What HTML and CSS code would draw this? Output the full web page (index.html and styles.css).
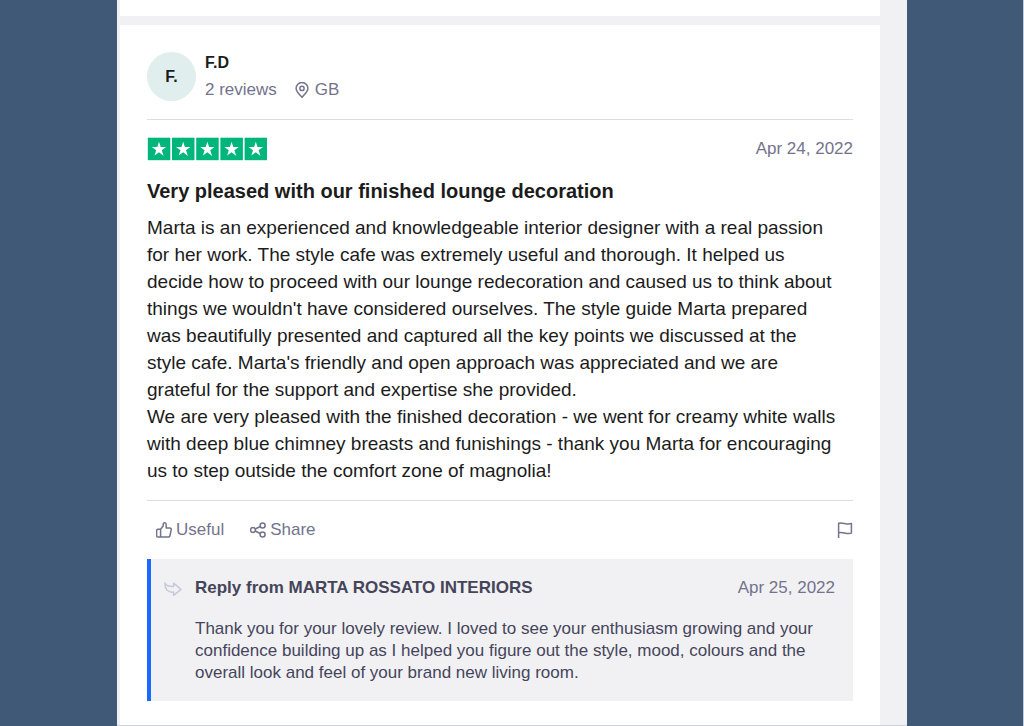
FILE: index.html
```
<!DOCTYPE html>
<html lang="en">
<head>
    <meta charset="UTF-8">
    <meta name="viewport" content="width=device-width, initial-scale=1.0">
    <title>Reviews</title>
    <link rel="stylesheet" href="styles.css">
</head>
<body>

    <main class="reviews">
        <div class="card card-previous"></div>

        <article class="card">
            <header class="consumer">
                <div class="avatar">F.</div>
                <div>
                    <div class="name">F.D</div>
                    <div class="details">
                        <span>2 reviews</span>
                        <span class="location">
                            <svg class="icon" viewBox="0 0 16 16"><path d="M8 15.3C5.2 12.2 2.1 9.3 2.1 6.4a5.9 5.9 0 0 1 11.8 0c0 2.900-3.100 5.800-5.900 8.900z"/><circle cx="8" cy="6.4" r="2.1"/></svg>
                            GB
                        </span>
                    </div>
                </div>
            </header>

            <div class="rating">
                <svg class="stars" viewBox="0 0 120 24" role="img" aria-label="Rated 5 out of 5 stars">
                    <defs>
                        <g id="star">
                            <path class="star-box" d="M0 0h22.5v22.5H0z"/>
                            <path class="star-shape" d="M11.2 4l1.7 5.2h5.5l-4.4 3.3 1.9 5.8-4.7-3.8-4.5 3.3 1.7-5.3L4 9.2h5.5z"/>
                        </g>
                    </defs>
                    <use href="#star" x="0.8" y="0.7"/>
                    <use href="#star" x="25" y="0.7"/>
                    <use href="#star" x="49.2" y="0.7"/>
                    <use href="#star" x="73.4" y="0.7"/>
                    <use href="#star" x="97.6" y="0.7"/>
                </svg>
                <time class="date" datetime="2022-04-24">Apr 24, 2022</time>
            </div>

            <h2>Very pleased with our finished lounge decoration</h2>
            <p class="text">Marta is an experienced and knowledgeable interior designer with a real passion for her work. The style cafe was extremely useful and thorough. It helped us decide how to proceed with our lounge redecoration and caused us to think about things we wouldn't have considered ourselves. The style guide Marta prepared was beautifully presented and captured all the key points we discussed at the style cafe. Marta's friendly and open approach was appreciated and we are grateful for the support and expertise she provided.<br>
            We are very pleased with the finished decoration - we went for creamy white walls with deep blue chimney breasts and funishings - thank you Marta for encouraging us to step outside the comfort zone of magnolia!</p>

            <div class="actions">
                <button type="button">
                    <svg class="icon" viewBox="0 0 16 16"><path d="M4.6 7.2 7.2 4V2.2c0-2 3-2 3 .5v3.2h3.6c1 0 1.6.8 1.4 1.7l-1.2 5.9c-.2 1-.8 1.6-1.8 1.6H4.6zM4.6 7.2H2.2c-1 0-1.6.6-1.6 1.6v4.7c0 1 .6 1.6 1.6 1.6h2.4"/></svg>
                    Useful
                </button>
                <button type="button">
                    <svg class="icon" viewBox="0 0 16 16"><circle cx="3" cy="8" r="2.4"/><circle cx="12.6" cy="3.4" r="2.5"/><circle cx="12.6" cy="12.6" r="2.5"/><path d="M5.2 7l5.1-2.5M5.2 9l5.1 2.5"/></svg>
                    Share
                </button>
                <button type="button" class="flag" aria-label="Flag review">
                    <svg class="icon" viewBox="0 0 16 16"><path d="M1.6 16V1.2c4.400-1.400 7.600 2 12.800.3v9.600c-5.200 1.600-8.200-1.800-12.800-.4"/></svg>
                </button>
            </div>

            <section class="reply">
                <svg class="icon reply-icon" viewBox="0 0 18 16"><path d="M1 2c.8 2.400 3.600 3.600 8.600 3.400V2.200L17 8.300l-7.400 6v-3.200C4.200 11.600.6 8.600 1 2z"/></svg>
                <div class="reply-content">
                    <div class="reply-header">
                        <h3>Reply from MARTA ROSSATO INTERIORS</h3>
                        <time class="date" datetime="2022-04-25">Apr 25, 2022</time>
                    </div>
                    <p>Thank you for your lovely review. I loved to see your enthusiasm growing and your confidence building up as I helped you figure out the style, mood, colours and the overall look and feel of your brand new living room.</p>
                </div>
            </section>
        </article>
    </main>

</body>
</html>
```
FILE: styles.css
```
* {
    box-sizing: border-box;
}
body {
    font-family: "Liberation Sans", Arial, sans-serif;
    font-size: 17px;
    line-height: 24px;
    color: #1c1c1c;
    margin: 0;
    padding: 0 116px 0 117px;
    background-color: #405976;
    border-right: 1px solid #c3cddb;
}
.reviews {
    background-color: #f1f1f4;
    padding: 0 27px 0 3px;
    border-bottom: 1px solid #cdd1db;
}
.card {
    background-color: white;
    padding: 26px 27px 24px;
}
.card-previous {
    height: 16px;
    padding: 0;
    margin-bottom: 9px;
}
.icon {
    width: 16px;
    height: 16px;
    fill: none;
    stroke: currentColor;
    stroke-width: 1.5;
    stroke-linejoin: round;
}
.consumer {
    display: flex;
    align-items: center;
    gap: 9px;
    padding-bottom: 17px;
    border-bottom: 1px solid #dcdce6;
}
.avatar {
    display: flex;
    align-items: center;
    justify-content: center;
    width: 49px;
    height: 49px;
    border-radius: 50%;
    background-color: #e0efed;
    font-size: 16px;
    font-weight: bold;
}
.name {
    font-size: 16px;
    font-weight: bold;
    margin-bottom: 3px;
}
.details {
    display: flex;
    gap: 17px;
    color: #73738c;
}
.location {
    display: flex;
    align-items: center;
    gap: 5px;
}
.rating {
    display: flex;
    align-items: center;
    justify-content: space-between;
    margin-top: 17px;
}
.stars {
    width: 120px;
    height: 24px;
}
.star-box {
    fill: #00b67a;
}
.star-shape {
    fill: white;
}
.date {
    color: #73738c;
}
h2 {
    font-size: 20px;
    line-height: 27px;
    margin: 17px 0 9px;
}
.text {
    font-size: 19px;
    line-height: 27px;
    margin: 0 0 16px;
    padding-right: 14px;
}
.actions {
    display: flex;
    gap: 26px;
    padding: 17px 0 17px 9px;
    border-top: 1px solid #dcdce6;
}
button {
    display: flex;
    align-items: center;
    gap: 4px;
    padding: 0;
    border: none;
    background: none;
    color: #73738c;
    font: inherit;
    cursor: pointer;
}
.flag {
    margin-left: auto;
}
.reply {
    display: flex;
    gap: 13px;
    padding: 17px 18px 17px 13px;
    background-color: #f1f1f4;
    border-left: 4px solid #1c69ff;
    color: #45455a;
}
.reply-icon {
    flex: none;
    width: 18px;
    margin-top: 5px;
    color: #c8c8dc;
}
.reply-content {
    flex: 1;
}
.reply-header {
    display: flex;
    justify-content: space-between;
    margin-bottom: 18px;
}
h3 {
    font-size: 17px;
    margin: 0;
}
.reply p {
    line-height: 22px;
    margin: 0;
}
```
